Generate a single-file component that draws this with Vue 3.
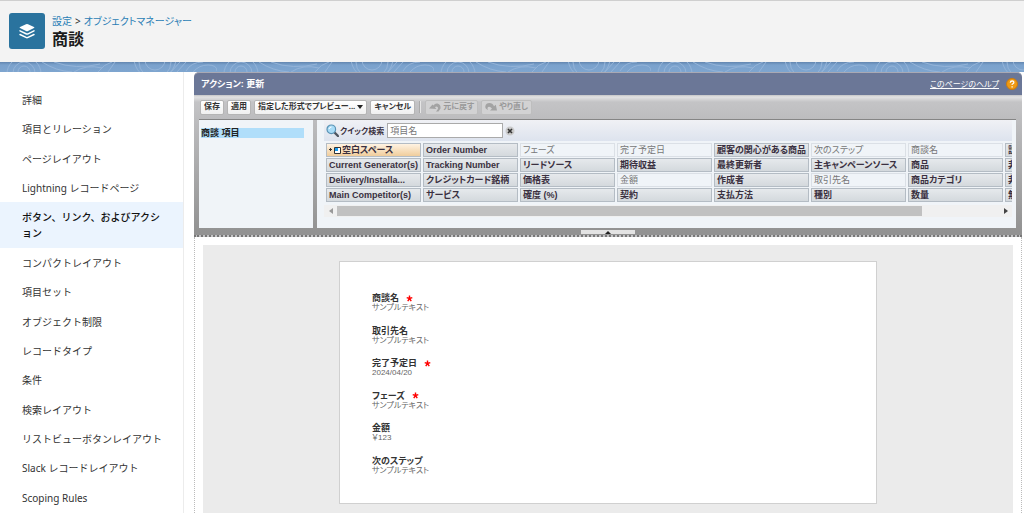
<script setup>
import { ref } from 'vue'

const menu = [
  '詳細',
  '項目とリレーション',
  'ページレイアウト',
  'Lightning レコードページ',
  'ボタン、リンク、およびアクション',
  'コンパクトレイアウト',
  '項目セット',
  'オブジェクト制限',
  'レコードタイプ',
  '条件',
  '検索レイアウト',
  'リストビューボタンレイアウト',
  'Slack レコードレイアウト',
  'Scoping Rules',
]
const current = 4

const palette = [
  ['空白スペース', 'Current Generator(s)', 'Delivery/Installa...', 'Main Competitor(s)'],
  ['Order Number', 'Tracking Number', 'クレジットカード銘柄', 'サービス'],
  ['フェーズ', 'リードソース', '価格表', '確度 (%)'],
  ['完了予定日', '期待収益', '金額', '契約'],
  ['顧客の関心がある商品', '最終更新者', '作成者', '支払方法'],
  ['次のステップ', '主キャンペーンソース', '取引先名', '種別'],
  ['商談名', '商品', '商品カテゴリ', '数量'],
  ['説明', '非公開', '非表示', '無効'],
].flat()
const used = ['フェーズ', '完了予定日', '金額', '次のステップ', '取引先名', '商談名']

const fields = [
  { label: '商談名', value: 'サンプルテキスト', required: true },
  { label: '取引先名', value: 'サンプルテキスト' },
  { label: '完了予定日', value: '2024/04/20', required: true },
  { label: 'フェーズ', value: 'サンプルテキスト', required: true },
  { label: '金額', value: '￥123' },
  { label: '次のステップ', value: 'サンプルテキスト' },
]
const query = ref('')
</script>

<template>
  <div class="page">
    <header class="top">
      <span class="logo">
        <svg viewBox="0 0 36 36" aria-hidden="true">
          <path d="M17 11.2q1-.5 2 0l6 2.700q.9.6 0 1.200l-6 2.800q-1 .5-2 0l-6-2.800q-.9-.6 0-1.200z" fill="#fff" />
          <path d="M11 17.900l6 2.900q1 .5 2 0l6-2.900M11 21.500l6 2.900q1 .5 2 0l6-2.900" fill="none" stroke="#fff" stroke-width="1.500" stroke-linecap="round" />
        </svg>
      </span>
      <div>
        <nav class="crumbs"><a href="#">設定</a><span>&gt;</span><a href="#">オブジェクトマネージャー</a></nav>
        <h1>商談</h1>
      </div>
    </header>
    <svg class="band" aria-hidden="true">
      <defs>
        <pattern id="contours" width="217" height="10" patternUnits="userSpaceOnUse">
          <g fill="none" stroke="#93b3d8" stroke-width="1">
            <circle cx="24" cy="12" r="17" /><circle cx="24" cy="11" r="11" /><circle cx="24" cy="10" r="6" />
            <circle cx="155" cy="0" r="16" /><circle cx="155" cy="-2" r="10" /><circle cx="155" cy="-4" r="21" />
            <path d="M42 0q14 9 30 10M54 0q22 8 46 2M98 10q6-8 14-10M108 10l7-10M171 10l9-10M177 10l9-10M186 9q5-9 17-9M193 10q6-7 15-7t9 6M74 10q12-8 28-4" />
          </g>
        </pattern>
      </defs>
      <rect width="100%" height="10" fill="url(#contours)" />
    </svg>

    <div class="body">
      <nav class="side">
        <a v-for="(m, i) in menu" :key="m" href="#" :class="{ on: i === current }">{{ m }}</a>
      </nav>

      <main class="main">
        <section class="editor">
          <div class="title">
            <h2>アクション: 更新</h2>
            <a href="#">このページのヘルプ</a>
            <svg class="help" viewBox="0 0 12 12" aria-hidden="true">
              <circle cx="6" cy="6" r="5.500" fill="#f09a12" stroke="#c97a10" />
              <path d="M4.300 4.700q.1-1.700 1.800-1.700t1.700 1.400q0 .8-.9 1.300t-.8 1.200M6.100 8.200v1.200" fill="none" stroke="#fff" stroke-width="1.300" />
            </svg>
          </div>
          <div class="tools">
            <button>保存</button>
            <button>適用</button>
            <button>指定した形式でプレビュー...<span class="caret"></span></button>
            <button>キャンセル</button>
            <i class="sep"></i>
            <button disabled>
              <svg viewBox="0 0 12 10" aria-hidden="true"><path d="M0 6.500L3.500 2.500 4.500 3.500Q6 1 8.500 1.500 12 2.500 11.500 6.500L9.500 9.500H7Q10 6.500 8.500 5 7.200 4 6 5.200L7.500 7Z" fill="#a3a3a3" /></svg>元に戻す
            </button>
            <button disabled>
              <svg viewBox="0 0 12 10" aria-hidden="true"><path d="M12 8.500H5L7 6.500Q5 4 3 5 1.800 6 3 8 0 7 .3 4.300 1 1 4.500 1 7.500 1 9 4.300L10.800 2.800Z" fill="#a3a3a3" /></svg>やり直し
            </button>
          </div>
          <div class="panes">
            <div class="groups"><a href="#">商談 項目</a></div>
            <div class="picker">
              <div class="search">
                <svg class="lens" viewBox="0 0 13 13" aria-hidden="true">
                  <path d="M8 8l4 4" stroke="#4e5660" stroke-width="2.400" stroke-linecap="round" />
                  <circle cx="5.300" cy="5.300" r="4.300" fill="#a9dcf7" stroke="#5a93b5" stroke-width="1.200" />
                  <path d="M3 5q.5-2 2.500-2" fill="none" stroke="#fff" />
                </svg>
                <label for="quick">クイック検索</label>
                <input id="quick" v-model="query" type="text" placeholder="項目名" />
                <button class="clear" aria-label="クリア">
                  <svg viewBox="0 0 10 10" aria-hidden="true"><circle cx="5" cy="5" r="4.500" fill="#c9c9c9" /><path d="M3 3l4 4M7 3L3 7" stroke="#333" stroke-width="1.600" /></svg>
                </button>
              </div>
              <div class="grid">
                <div v-for="(p, i) in palette" :key="p" class="cell" :class="{ used: used.includes(p), blank: i === 0 }">
                  <svg v-if="i === 0" viewBox="0 0 13 9" aria-hidden="true"><path d="M0 3.500h3M1.500 2v3" stroke="#333" /><path d="M5.500 1.500h6v6h-6z" fill="#fff" stroke="#333" /><path d="M6 2h3v3H6z" fill="#189cf0" /></svg>{{ p }}
                </div>
              </div>
              <div class="scroll"><i class="left"></i><span class="track"><span class="thumb"></span></span><i class="right"></i></div>
            </div>
          </div>
          <div class="foot"><button aria-label="折りたたむ"><i></i></button></div>
        </section>

        <section class="canvas">
          <div class="ground">
            <dl class="card">
              <div v-for="f in fields" :key="f.label">
                <dt>{{ f.label }}<svg v-if="f.required" viewBox="0 0 8 8" aria-hidden="true"><path d="M4 .5V4M.8 3L4 4l3.200-1M2 7l2-3 2 3" fill="none" stroke="#f00" stroke-width="1.600" /></svg></dt>
                <dd>{{ f.value }}</dd>
              </div>
            </dl>
          </div>
        </section>
      </main>
    </div>
  </div>
</template>

<style>
body { background: #fff; }
</style>

<style scoped>
* { box-sizing: border-box; }
.page { min-height: 100vh; display: flex; flex-direction: column; font-family: "Noto Sans", "Noto Sans CJK JP", sans-serif; font-size: 10px; color: #2b2b2b; }
h1, h2, dl, dd { margin: 0; }
button { font: inherit; color: inherit; }
svg { flex: none; }

.top { height: 62px; display: flex; align-items: center; gap: 7px; padding: 0 9px 2px; background: #f3f3f3; border-top: 1px solid #cfcfcf; }
.logo { width: 36px; height: 36px; border-radius: 3px; background: #2a739e; }
.logo svg { display: block; width: 36px; height: 36px; }
.crumbs { display: flex; gap: 3px; line-height: 16px; font-feature-settings: "palt"; }
.crumbs a { color: #2a7db5; text-decoration: none; }
h1 { font-size: 16px; line-height: 20px; color: #1c1c1c; }
.band { display: block; width: 100%; height: 10px; background: linear-gradient(#6286b0, #7ba2cd 3px, #7ea5cf); }

.body { flex: 1; display: flex; }
.side { width: 184px; flex: none; display: flex; flex-direction: column; padding: 13px 0 1px; border-right: 1px solid #ececec; }
.side a { flex: 1 0 auto; padding: 7px 16px 6px 22px; line-height: 16px; color: #333; text-decoration: none; }
.side a.on { background: #ebf4fe; font-weight: 500; color: #111; }

.main { flex: 1; min-width: 0; margin: 0 2px 0 10px; display: flex; flex-direction: column; font-family: "Liberation Sans", "Noto Sans CJK JP", sans-serif; font-size: 9px; font-feature-settings: "palt"; }
.editor { background: linear-gradient(#c4c4c6 23px, #e2e2e3 25px, #c4c4c6 30px, #bdbdbf 46px, #929292 160px); border-radius: 5px 5px 0 0; border-bottom: 2px dotted #777; }
.title { height: 23px; display: flex; align-items: center; padding: 0 4px 1px 7px; background: #6b7797; border-radius: 5px 5px 0 0; border-top: 1px solid #a9a9b4; color: #fff; }
.title h2 { flex: 1; font-size: 9px; }
.title a { font-size: 8px; color: #fff; }
.help { width: 12px; height: 12px; margin-left: 7px; }

.tools { height: 24px; display: flex; align-items: center; gap: 3px; padding-left: 6px; font-size: 8px; }
.tools button { height: 15px; display: flex; align-items: center; gap: 2px; padding: 0 3px; border: 1px solid #b5b5b5; border-radius: 2px; background: linear-gradient(#fff, #f0f0f0); font-weight: 700; line-height: 12px; white-space: nowrap; color: #333; }
.tools button:disabled { background: #d2d2d3; border-color: #bebebe; color: #999; }
.tools svg { width: 12px; height: 10px; }
.caret { border: 3px solid transparent; border-top: 4px solid #222; border-bottom: 0; }
.sep { width: 2px; height: 12px; margin: 0 1px; background: #e6e6e6; border-left: 1px solid #aaa; }

.panes { display: flex; margin: 0 6px 0 5px; height: 109px; border-top: 1px solid #858585; }
.groups { width: 114px; flex: none; padding: 8px 9px 0 2px; background: #f0f4f8; }
.groups a { display: block; line-height: 10px; background: #b0defa; color: #222; font-weight: 700; text-decoration: none; }
.picker { flex: 1; min-width: 0; margin-left: 4px; padding: 0 4px 0 7px; background: #f0f4f8; }
.search { height: 21px; display: flex; align-items: center; padding-left: 2px; background: linear-gradient(#f0f1f5, #dde3ee); }
.search label { margin: 0 3px 0 1px; font-size: 8px; font-weight: 700; color: #3a3040; }
.lens { width: 13px; height: 13px; }
.search input { width: 116px; height: 15px; padding: 0 2px; border: 1px solid #aaa; background: #fff; font: inherit; color: #333; }
.search input::placeholder { color: #777; }
.clear { margin-left: 2px; padding: 0; border: 0; background: none; display: flex; }
.clear svg { width: 10px; height: 10px; }
.grid { display: grid; grid-auto-flow: column; grid-template-rows: repeat(4, 14px); grid-auto-columns: 95px; gap: 1px 2px; margin-top: 2px; padding-left: 2px; overflow: hidden; }
.cell { display: flex; align-items: center; padding-left: 2px; border: 1px solid #b4bcc4; background: linear-gradient(#e6e9ec, #d4d9dd); font-weight: 700; line-height: 12px; white-space: nowrap; overflow: hidden; color: #3a3040; }
.cell.used { background: #f0f4f8; border-color: #dbe0e6; font-weight: 400; color: #777; }
.cell.blank { background: linear-gradient(#fff3e3, #f0cd9c); }
.cell svg { width: 13px; height: 9px; }
.scroll { height: 12px; margin-top: 3px; display: flex; align-items: center; justify-content: space-between; padding: 0 4px 0 5px; background: #f0f0f0; }
.scroll i { border: 3px solid transparent; }
.scroll .left { border-right: 4px solid #999; border-left: 0; }
.scroll .right { border-left: 4px solid #444; border-right: 0; }
.track { flex: 1; margin: 0 2px 0 4px; }
.thumb { display: block; width: 88%; height: 10px; background: #c1c1c1; }
.foot { height: 7px; display: flex; justify-content: center; align-items: center; }
.foot button { width: 54px; height: 4px; padding: 0; border: 0; display: flex; justify-content: center; background: #e3e3e3; }
.foot i { border: 3px solid transparent; border-bottom: 3px solid #222; border-top: 0; }

.canvas { flex: 1; display: flex; padding: 8px 8px 0; border: 1px dotted #bbb; border-width: 0 1px; }
.ground { flex: 1; display: flex; padding: 16px 136px 9px; background: #ebebeb; }
.card { flex: 1; display: flex; flex-direction: column; justify-content: space-between; padding: 31px 32px 27px; background: #fff; border: 1px solid #d0d0d0; }
dt { display: flex; align-items: center; gap: 7px; line-height: 10px; font-weight: 700; color: #333; }
dt svg { width: 7px; height: 7px; }
dd { font-size: 8px; line-height: 10px; color: #666; }
</style>
